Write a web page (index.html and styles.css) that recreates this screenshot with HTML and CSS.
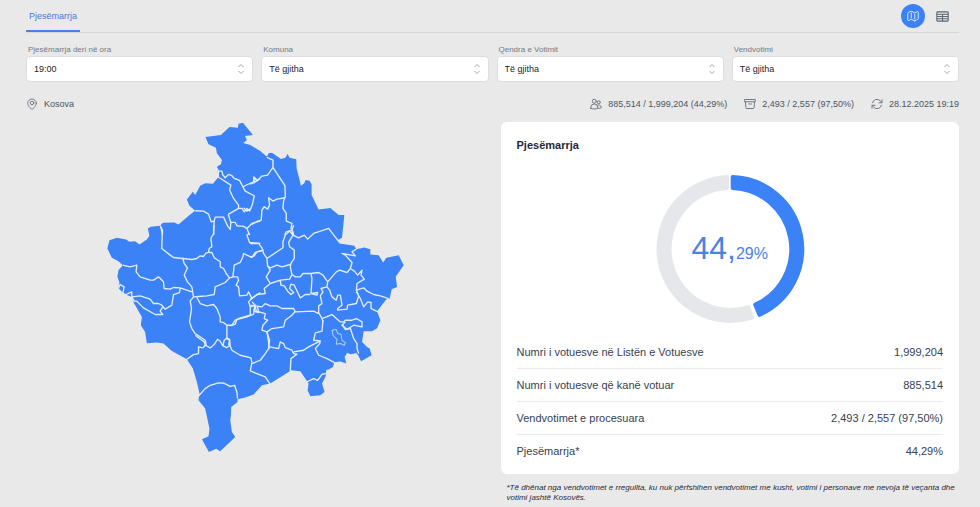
FILE: index.html
```html
<!DOCTYPE html>
<html lang="sq">
<head>
<meta charset="utf-8">
<meta name="viewport" content="width=device-width, initial-scale=1">
<title>Pjesëmarrja</title>
<link rel="stylesheet" href="styles.css">
</head>
<body>
<div class="page">
  <header class="topbar">
    <nav class="tabs"><a class="tab" href="#pjesemarrja">Pjesëmarrja</a></nav>
    <div class="views">
      <button class="view view-active" type="button" aria-label="Harta">
        <svg class="icon" viewBox="0 0 24 24"><path d="M8.500 6V16M15.500 8v10M15.500 21.500l5.500-2.500c.8-.4 1.500-1 1.500-2V4.500c0-1.200-1-1.800-2-1.300L16 5.300c-.4.2-.8.2-1.200 0L9 2.600a1.300 1.300 0 0 0-1.200 0L2.700 5c-.7.3-1.200.9-1.200 1.700v13c0 1.200 1 1.800 2 1.300l4.500-2.200c.4-.2.8-.2 1.200 0l5.200 2.600c.4.200.7.200 1.100.1Z"/></svg>
      </button>
      <button class="view" type="button" aria-label="Tabela">
        <svg class="icon icon-table" viewBox="0 0 24 24"><path d="M3 3.500h18q1.500 0 1.500 1.500v14q0 1.500-1.500 1.500H3q-1.500 0-1.500-1.500V5q0-1.500 1.500-1.500ZM1.500 7.800h21M1.500 12h21M1.500 16.200h21M12 7.800v12.700"/></svg>
      </button>
    </div>
  </header>

  <form class="filters">
    <div class="field">
      <label for="ora">Pjesëmarrja deri në ora</label>
      <div class="control"><select id="ora"><option>19:00</option></select><svg class="arrows" viewBox="0 0 10 12"><path d="M2.500 4 5 1.500l2.500 2.500M2.500 8l2.500 2.500 2.500-2.500"/></svg></div>
    </div>
    <div class="field">
      <label for="komuna">Komuna</label>
      <div class="control"><select id="komuna"><option>Të gjitha</option></select><svg class="arrows" viewBox="0 0 10 12"><path d="M2.500 4 5 1.500l2.500 2.500M2.500 8l2.500 2.500 2.500-2.500"/></svg></div>
    </div>
    <div class="field">
      <label for="qendra">Qendra e Votimit</label>
      <div class="control"><select id="qendra"><option>Të gjitha</option></select><svg class="arrows" viewBox="0 0 10 12"><path d="M2.500 4 5 1.500l2.500 2.500M2.500 8l2.500 2.500 2.500-2.500"/></svg></div>
    </div>
    <div class="field">
      <label for="vendvotimi">Vendvotimi</label>
      <div class="control"><select id="vendvotimi"><option>Të gjitha</option></select><svg class="arrows" viewBox="0 0 10 12"><path d="M2.500 4 5 1.500l2.500 2.500M2.500 8l2.500 2.500 2.500-2.500"/></svg></div>
    </div>
  </form>

  <div class="summary">
    <div class="item place">
      <svg class="icon" viewBox="0 0 24 24"><circle cx="12" cy="10" r="3.500"/><path d="M20.500 10.500c0 7-8.500 12-8.500 12s-8.500-5-8.500-12a8.500 8.500 0 0 1 17 0Z"/></svg>
      <span>Kosova</span>
    </div>
    <div class="item">
      <svg class="icon" viewBox="0 0 24 24"><circle cx="8.500" cy="6.500" r="4"/><circle cx="17.500" cy="8.500" r="3"/><path d="M1.500 20.500v-1.500a7 7 0 0 1 14 0v1.500c-4 2-10 2-14 0ZM15.500 20.500c2.500.2 5 0 7-1 .5-4.500-4.500-7.500-8.300-4.500"/></svg>
      <span>885,514 / 1,999,204 (44,29%)</span>
    </div>
    <div class="item">
      <svg class="icon" viewBox="0 0 24 24"><path d="M1.500 3h21v4.500h-21ZM3 7.500l.6 11.500q.1 2 2.100 2h12.600q2 0 2.100-2L21 7.500M9.500 12h5"/></svg>
      <span>2,493 / 2,557 (97,50%)</span>
    </div>
    <div class="item">
      <svg class="icon" viewBox="0 0 24 24"><path d="M16 9.500h6V3.500M8 14.500H2v6M3 9.500a9.200 9.200 0 0 1 15.500-4L22 9.500M21 14.500a9.200 9.200 0 0 1-15.500 4L2 14.500"/></svg>
      <span>28.12.2025 19:19</span>
    </div>
  </div>

  <main class="content">
    <svg class="map" viewBox="26 122 458 335" role="img" aria-label="Kosova">
      <path class="land" d="M205.300 137 220.700 135 229.300 127 237.700 127.700 238.300 123.700 242.700 122.700 252.700 135 244.700 136 246.700 140 243 143 250 145 260 151 266.700 156.700 268.300 153.300 271.700 152.700 280.700 159 285 157.700 287.300 154 289.300 157.700 296 159.300 296.300 168.300 300.700 185.700 304 183.300 305.300 180 309.300 180.700 311.300 184.300 311.300 195 318.300 209.300 330 208 338.300 215 344 215 341.700 237.700 337.300 240 339.300 243.300 350.700 245 354 245.700 356 249 364 247.300 370 249 370 254.300 378.300 255 382.700 262.300 386 257.700 398.300 255 403.300 265 395.300 276.700 396.700 286.700 391.300 289 389.300 298.300 386 299 376.700 311 380 320 376.700 328 371.700 331 363.300 331 361.700 341.700 366.700 346.700 369.300 348.300 371.300 355 360.700 361 358.300 356 356 352.700 350.700 354 346.700 352.700 344.300 356.700 346 363.300 340 361.300 334 362 332.700 366.700 327 370 325 376.700 321.700 383.300 324.300 391.700 320 395 310 396 307.300 390 308.300 383.300 302.700 375 300 371 291 370 280 377 270 383.300 261.700 385 253.300 394.300 245 397.300 237.300 399 237.300 401.700 231 406.700 230.700 415 230 420 231.700 431.700 235 436.700 220 451 216 448.300 208.700 451.700 201.700 439 208.300 436 209.300 428.300 205 408.300 198.300 400 199.300 393.300 196.700 381.700 192.700 368.300 186.700 359 171.700 350.700 163.300 343.300 156.700 342.300 146.700 343 145 331.700 140.700 325 141.700 316.700 133.300 301.700 131.700 296.700 123.300 293.300 118.300 287.700 119.300 282.300 117.300 276.700 118.300 270 122.700 265 118.300 261 111.700 257.700 107.300 248.300 109.300 240 116.700 237.700 126 239.300 129.300 241.700 135 241 139.300 244.300 146.700 239.300 149.300 235.700 147.700 228.300 150.700 226.700 160 225.700 162.700 222.700 174 222.300 178.300 224.300 190 214.300 195 210.700 189.300 205.700 186.700 199.300 192.700 191.700 195 195 200 185.700 205 183.300 212.700 183.700 218.300 177 217.300 170 216.700 166.700 220.700 164.300 221.700 160 216.700 153.300 215.700 147.700 208.300 144.300Z"/>
      <g class="borders" transform="translate(100 115) scale(.33333)">
        <path d="M348 157 355 168 365 168 368 180 375 188 385 178 395 182 402 190 418 196 428 215 460 200 462 186 470 198 480 190M355 168 354 186 392 210 388 225 400 250 415 270 415 280 384 298M428 215 435 228 462 242 456 270 448 288 440 280 432 290 425 280 415 280M430 278 440 288 454 278M285 287 310 288 325 297 333 320 342 318 345 306 370 306 382 332 390 343 392 322 384 298M392 322 405 322 410 332 430 334 440 340 455 325 480 318M342 318 340 345 341 360M440 340 448 360M180 332 187 345 187 360"/>
      </g>
      <g class="borders" transform="translate(250 115) scale(.33333)">
        <path d="M20 196 12 203 10 186 22 196 35 183 52 180 68 157 68 135 50 127M10 203 0 207M68 157 104 212 105 245 100 257M105 248 80 252 68 258 55 248 58 270 52 282 42 275 35 285 33 315 22 318 5 328M100 257 98 280 108 295 108 318 125 325 122 340 128 350 130 360M125 345 108 350 103 360"/>
      </g>
      <g class="borders" transform="translate(100 225) scale(.33333)">
        <path d="M182 5 186 25 185 70 210 90 220 97 248 100 275 103 290 100 300 92 310 94 317 84 325 82 327 70 335 65 332 40 340 25 342 0M327 82 335 82 342 98 360 110 360 125 370 130 378 145 388 158 398 155 402 120 420 112 428 95 430 85 440 90 455 97 465 82 490 75M448 25 440 30 448 52 480 55M248 100 252 115 262 128 252 150 262 170 275 185 280 215 270 228 274 250 268 290 275 310 285 325 315 345 318 360M68 120 90 125 110 120 108 140 120 155 150 165 160 165 175 155 190 170 192 190 210 192 220 187 240 188 275 200M240 188 238 202 220 208 215 240 195 252 185 240 175 235 160 235 150 222 120 212 95 215 95 200 78 208 68 205 72 185 60 178 55 190M95 215 102 228 110 228 130 248 165 268 188 268 180 258 188 245M280 215 295 214 320 212 342 208 345 185 375 172 388 158M290 217 300 235 320 242 340 238 350 250 360 275 360 290 370 292 380 300 395 300 405 285 420 278 450 270 450 245 465 240M380 300 380 340 388 345 385 360M398 155 412 155 415 165 408 180 415 185 418 212 440 210 445 200 455 220 480 202M455 220 445 230 450 245M455 230 465 240 460 258 475 262 472 245"/>
      </g>
      <g class="borders" transform="translate(250 225) scale(.33333)">
        <path d="M0 55 25 55 35 68 40 85 50 100 98 68 98 50 105 30 118 18 128 30 145 38 162 30 172 42 190 25 235 10 252 32 268 52M128 30 125 15 130 0M128 30 115 52 118 65 132 75 132 100 122 115 120 125M50 100 52 122 60 128 80 120 95 125 120 118M0 97 12 92 20 80 38 76M52 122 60 135 48 155 60 175 42 190 45 205 20 208 0 222M60 175 90 165 118 162 125 148 120 125M125 148 135 155 150 155 158 145 182 145M90 165 92 180 102 182 112 198 122 208 130 202 118 190 122 177 132 180 150 218 165 208 180 208M182 145 185 160 182 205 200 210 202 202 182 205M182 145 205 142 218 150 232 170 230 185 212 190 218 200 210 212 215 235 205 242 205 262 215 280 218 290M232 170 258 140 268 135 290 142 300 130 305 112 285 90 275 85 315 92 305 80 318 72M300 130 312 138 322 150 335 135 332 150 342 162 320 175 318 195 340 188 350 198 370 208 390 212 415 220M318 195 325 212 318 235 292 240 290 252 262 255 262 250 275 240 270 210 262 210 258 225 245 215 238 195 230 185M318 200 330 220 340 245 352 230 362 232 362 250 388 262M0 240 15 242 35 245 45 235 60 242 80 242 95 250 130 250 135 260 190 258 205 265M15 242 18 258 45 265 42 280 52 285 38 300 35 315 50 320 65 310 100 305 105 285 125 270 135 258M50 320 55 350 56 372M215 280 245 268 270 290 280 290 285 285 305 285 318 280 335 290 335 305 310 300 290 312 275 300 285 290"/>
      </g>
      <g class="borders" transform="translate(230 300) scale(.33333)">
        <path d="M0 77 15 72 20 58 50 50 70 42 75 20M110 95 118 120 115 145 105 160 90 180 65 190M65 187 60 212 105 230 120 252M118 140 145 145 150 125 160 130 165 142 185 150 190 160 200 162 182 175 180 212M190 155 220 150 235 140 270 122 250 120 255 98 275 93 278 60M270 122 268 130 255 145 265 165 290 175 314 188M230 245 240 240 250 235 262 240 275 222 288 220 291 208M335 72 345 88 360 85 370 115 380 130 380 145 385 160"/>
        <path class="lake" d="M305 90 318 88 322 100 332 102 335 120 345 128 342 135 330 130 318 132 320 118 308 105Z"/>
      </g>
      <g class="borders" transform="translate(130 335) scale(.33333)">
        <path d="M170 72 190 58 205 55 205 35 218 38 225 30 222 20 195 0M225 30 240 38 252 28 262 12 270 18 278 32 282 15 290 8 298 12 300 30 290 37 278 32M298 28 305 45 330 60 362 68 365 82M205 182 225 160 240 150 265 143 282 144 300 153 313 150 320 170 322 190"/>
      </g>
    </svg>

    <section class="results" id="pjesemarrja">
      <div class="card">
        <h2>Pjesëmarrja</h2>
        <div class="donut">
          <svg viewBox="-75 -75 150 150" aria-hidden="true">
            <path class="rest" d="M22.100 68.600A72 72 0 1 1-3-72V-61A61 61 0 1 0 18.500 58.200Z"/>
            <path class="share" d="M2.700-72A72 72 0 0 1 29.400 65.800L25.200 55.600A61 61 0 0 0 2.700-61Z"/>
          </svg>
          <p class="percent">44,<span>29%</span></p>
        </div>
        <table>
          <tbody>
            <tr><th scope="row">Numri i votuesve në Listën e Votuesve</th><td>1,999,204</td></tr>
            <tr><th scope="row">Numri i votuesve që kanë votuar</th><td>885,514</td></tr>
            <tr><th scope="row">Vendvotimet e procesuara</th><td>2,493 / 2,557 (97,50%)</td></tr>
            <tr><th scope="row">Pjesëmarrja*</th><td>44,29%</td></tr>
          </tbody>
        </table>
      </div>
      <p class="note">*Të dhënat nga vendvotimet e rregullta, ku nuk përfshihen vendvotimet me kusht, votimi i personave me nevoja të veçanta dhe votimi jashtë Kosovës.</p>
    </section>
  </main>
</div>
</body>
</html>
```
FILE: styles.css
```css
* { box-sizing: border-box; }
body {
  margin: 0;
  background: #e9e9e9;
  color: #374151;
  font-family: "Liberation Sans", Arial, sans-serif;
  font-size: 9px;
}
.page { padding: 0 21px 0 26px; }
.topbar {
  display: flex;
  justify-content: space-between;
  height: 33px;
  border-bottom: 1px solid #d5d8dd;
}
.tabs { display: flex; }
.tab {
  display: flex;
  align-items: center;
  padding: 2px 3px 0;
  border-bottom: 2px solid #4a80e8;
  color: #4a78d8;
  text-decoration: none;
}
.views { display: flex; align-items: center; gap: 5px; padding-right: 5px; }
.view {
  display: grid;
  place-items: center;
  width: 24px;
  height: 24px;
  padding: 0;
  border: 0;
  border-radius: 50%;
  background: none;
  color: #5b6472;
}
.view-active { background: #3b82f6; color: #dbe8ff; }
.icon {
  display: block;
  flex: none;
  width: 12px;
  height: 12px;
  fill: none;
  stroke: currentColor;
  stroke-width: 2;
  stroke-linecap: round;
  stroke-linejoin: round;
}
.icon-table { width: 13px; height: 13px; }
.filters {
  display: grid;
  grid-template-columns: repeat(4, 1fr);
  gap: 8px;
  padding-top: 10px;
}
.field label {
  display: block;
  padding-left: 2px;
  color: #737982;
  font-size: 8px;
  line-height: 13px;
}
.control { display: grid; align-items: center; }
.control > * { grid-area: 1 / 1; }
.control select {
  appearance: none;
  width: 100%;
  height: 26px;
  padding: 0 24px 0 7px;
  border: 1px solid #dcdee1;
  border-radius: 4px;
  background: #fff;
  color: #1f2329;
  font: inherit;
}
.arrows {
  justify-self: end;
  width: 10px;
  height: 12px;
  margin-right: 7px;
  fill: none;
  stroke: #a3a6ab;
  pointer-events: none;
}
.summary {
  display: flex;
  gap: 17px;
  padding: 14px 0 10px;
  line-height: 16px;
  color: #4b5563;
}
.item { display: flex; align-items: center; gap: 6px; }
.item .icon { stroke-width: 2; color: #737985; }
.place { margin-right: auto; }
.content {
  display: grid;
  grid-template-columns: 1fr 1fr;
  gap: 16px;
  align-items: start;
}
.map { display: block; width: 100%; height: auto; }
.land { fill: #3b82f6; }
.borders { fill: none; stroke: #e4edfb; stroke-width: 4; stroke-linejoin: round; }
.lake { stroke: #b5d0fb; stroke-width: 3; }
.card {
  padding: 15px 16px 7px;
  border-radius: 6px;
  background: #fff;
}
.card h2 {
  margin: 0;
  color: #1f2937;
  font-size: 11px;
  line-height: 16px;
}
.donut { display: grid; place-items: center; padding: 21px 0 12px; }
.donut > * { grid-area: 1 / 1; }
.donut svg { width: 150px; height: 150px; }
.donut path { stroke-width: 4; stroke-linejoin: round; }
.rest { fill: #e5e7eb; stroke: #e5e7eb; }
.share { fill: #3b82f6; stroke: #3b82f6; }
.percent { margin: 0; padding-top: 4px; color: #4a82e4; font-size: 32px; line-height: 36px; }
.percent span { font-size: 16px; }
table { width: 100%; border-collapse: collapse; font-size: 11px; line-height: 16px; }
th, td { padding: 8px 0; font-weight: 400; text-align: left; }
td { text-align: right; }
tr + tr { border-top: 1px solid #e8eaed; }
.note {
  margin: 0;
  padding: 9px 0 0 6px;
  color: #1f2937;
  font-size: 8px;
  font-style: italic;
  line-height: 10px;
}
```
